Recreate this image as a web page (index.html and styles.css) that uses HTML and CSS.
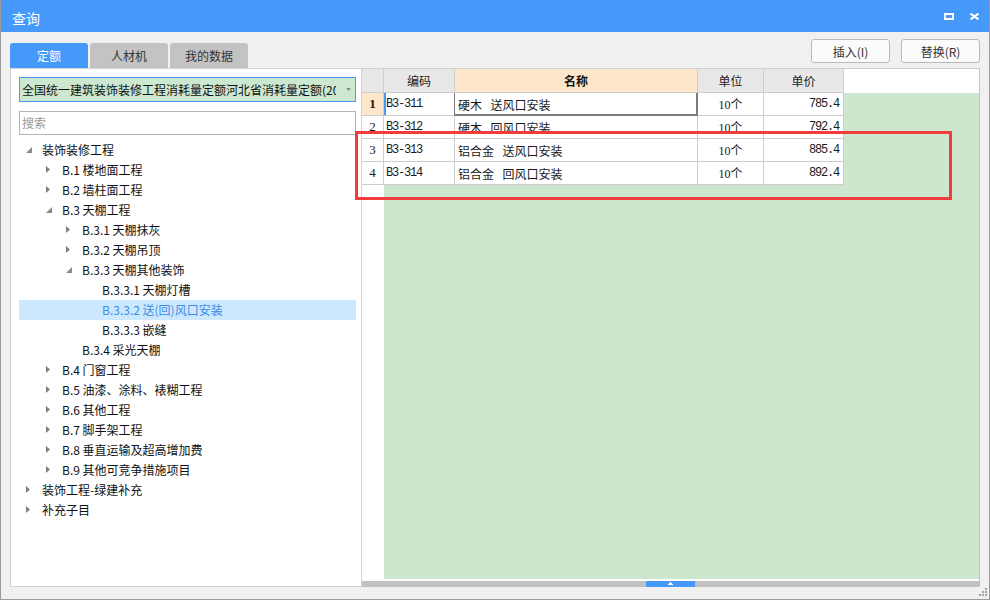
FILE: index.html
```html
<!DOCTYPE html>
<html lang="zh-CN">
<head>
<meta charset="utf-8">
<title>查询</title>
<link rel="stylesheet" href="styles.css">
</head>
<body>
<div class="window">
  <div class="titlebar">
    <span class="title">查询</span>
    <div class="winbtns">
      <svg class="wb-max" width="10" height="7" viewBox="0 0 10 7"><rect x="1" y="1" width="8" height="5" fill="none" stroke="#fff" stroke-width="2"/></svg>
      <svg class="wb-close" width="9" height="7" viewBox="0 0 9 7"><path d="M0.5 0.5L8.5 6.5M8.5 0.5L0.5 6.5" stroke="#fff" stroke-width="2"/></svg>
    </div>
  </div>
  <div class="content">
    <div class="toprow">
      <div class="tabs">
        <div class="tab active">定额</div>
        <div class="tab">人材机</div>
        <div class="tab">我的数据</div>
      </div>
      <div class="actions">
        <button class="btn">插入(I)</button>
        <button class="btn">替换(R)</button>
      </div>
    </div>
    <div class="main">
      <div class="left">
        <div class="select">
          <span class="select-text">全国统一建筑装饰装修工程消耗量定额河北省消耗量定额(2012)</span>
          <svg class="select-arrow" width="5" height="3" viewBox="0 0 5 3"><path d="M0 0H5L2.5 3Z" fill="#8a8a8a"/></svg>
        </div>
        <div class="search">搜索</div>
        <ul class="tree">
          <li class="node l0"><span class="tog"><svg width="6" height="6" viewBox="0 0 6 6"><path d="M6 0V6H0Z" fill="#8a8a8a"/></svg></span><span class="label">装饰装修工程</span></li>
          <li class="node l1"><span class="tog"><svg width="4" height="7" viewBox="0 0 4 7"><path d="M0 0L4 3.5L0 7Z" fill="#7f7f7f"/></svg></span><span class="label">B.1 楼地面工程</span></li>
          <li class="node l1"><span class="tog"><svg width="4" height="7" viewBox="0 0 4 7"><path d="M0 0L4 3.5L0 7Z" fill="#7f7f7f"/></svg></span><span class="label">B.2 墙柱面工程</span></li>
          <li class="node l1"><span class="tog"><svg width="6" height="6" viewBox="0 0 6 6"><path d="M6 0V6H0Z" fill="#8a8a8a"/></svg></span><span class="label">B.3 天棚工程</span></li>
          <li class="node l2"><span class="tog"><svg width="4" height="7" viewBox="0 0 4 7"><path d="M0 0L4 3.5L0 7Z" fill="#7f7f7f"/></svg></span><span class="label">B.3.1 天棚抹灰</span></li>
          <li class="node l2"><span class="tog"><svg width="4" height="7" viewBox="0 0 4 7"><path d="M0 0L4 3.5L0 7Z" fill="#7f7f7f"/></svg></span><span class="label">B.3.2 天棚吊顶</span></li>
          <li class="node l2"><span class="tog"><svg width="6" height="6" viewBox="0 0 6 6"><path d="M6 0V6H0Z" fill="#8a8a8a"/></svg></span><span class="label">B.3.3 天棚其他装饰</span></li>
          <li class="node l3"><span class="tog"></span><span class="label">B.3.3.1 天棚灯槽</span></li>
          <li class="node l3 selected"><span class="tog"></span><span class="label">B.3.3.2 送(回)风口安装</span></li>
          <li class="node l3"><span class="tog"></span><span class="label">B.3.3.3 嵌缝</span></li>
          <li class="node l2"><span class="tog"></span><span class="label">B.3.4 采光天棚</span></li>
          <li class="node l1"><span class="tog"><svg width="4" height="7" viewBox="0 0 4 7"><path d="M0 0L4 3.5L0 7Z" fill="#7f7f7f"/></svg></span><span class="label">B.4 门窗工程</span></li>
          <li class="node l1"><span class="tog"><svg width="4" height="7" viewBox="0 0 4 7"><path d="M0 0L4 3.5L0 7Z" fill="#7f7f7f"/></svg></span><span class="label">B.5 油漆、涂料、裱糊工程</span></li>
          <li class="node l1"><span class="tog"><svg width="4" height="7" viewBox="0 0 4 7"><path d="M0 0L4 3.5L0 7Z" fill="#7f7f7f"/></svg></span><span class="label">B.6 其他工程</span></li>
          <li class="node l1"><span class="tog"><svg width="4" height="7" viewBox="0 0 4 7"><path d="M0 0L4 3.5L0 7Z" fill="#7f7f7f"/></svg></span><span class="label">B.7 脚手架工程</span></li>
          <li class="node l1"><span class="tog"><svg width="4" height="7" viewBox="0 0 4 7"><path d="M0 0L4 3.5L0 7Z" fill="#7f7f7f"/></svg></span><span class="label">B.8 垂直运输及超高增加费</span></li>
          <li class="node l1"><span class="tog"><svg width="4" height="7" viewBox="0 0 4 7"><path d="M0 0L4 3.5L0 7Z" fill="#7f7f7f"/></svg></span><span class="label">B.9 其他可竞争措施项目</span></li>
          <li class="node l0"><span class="tog"><svg width="4" height="7" viewBox="0 0 4 7"><path d="M0 0L4 3.5L0 7Z" fill="#7f7f7f"/></svg></span><span class="label">装饰工程-绿建补充</span></li>
          <li class="node l0"><span class="tog"><svg width="4" height="7" viewBox="0 0 4 7"><path d="M0 0L4 3.5L0 7Z" fill="#7f7f7f"/></svg></span><span class="label">补充子目</span></li>
        </ul>
      </div>
      <div class="grid">
        <div class="ghead">
          <div class="c rh"></div>
          <div class="c code">编码</div>
          <div class="c name">名称</div>
          <div class="c unit">单位</div>
          <div class="c price">单价</div>
        </div>
        <div class="gbody">
          <div class="grow current">
            <div class="c rh">1</div>
            <div class="c code">B3-311</div>
            <div class="c name active">硬木  送风口安装</div>
            <div class="c unit">10个</div>
            <div class="c price">785.4</div>
          </div>
          <div class="grow">
            <div class="c rh">2</div>
            <div class="c code">B3-312</div>
            <div class="c name">硬木  回风口安装</div>
            <div class="c unit">10个</div>
            <div class="c price">792.4</div>
          </div>
          <div class="grow">
            <div class="c rh">3</div>
            <div class="c code">B3-313</div>
            <div class="c name">铝合金  送风口安装</div>
            <div class="c unit">10个</div>
            <div class="c price">885.4</div>
          </div>
          <div class="grow">
            <div class="c rh">4</div>
            <div class="c code">B3-314</div>
            <div class="c name">铝合金  回风口安装</div>
            <div class="c unit">10个</div>
            <div class="c price">892.4</div>
          </div>
        </div>
        <div class="hscroll">
          <div class="thumb"><svg width="5" height="3" viewBox="0 0 5 3"><path d="M2 0H3V1H4V2H5V3H0V2H1V1H2Z" fill="#fff"/></svg></div>
        </div>
      </div>
    </div>
  </div>
  <div class="redbox"></div>
  <svg class="grip" width="8" height="9" viewBox="0 0 8 9"><g fill="#a3a3a3"><rect x="6" y="1" width="2" height="2"/><rect x="3" y="4" width="2" height="2"/><rect x="6" y="4" width="2" height="2"/><rect x="0" y="7" width="2" height="2"/><rect x="3" y="7" width="2" height="2"/><rect x="6" y="7" width="2" height="2"/></g></svg>
</div>
</body>
</html>
```
FILE: styles.css
```css
* { box-sizing: border-box; margin: 0; padding: 0; }
html, body { width: 990px; height: 600px; overflow: hidden; }
body {
  font-family: "Noto Sans CJK SC", "Microsoft YaHei", sans-serif;
  font-size: 12px;
  color: #1a1a1a;
  background: #f0f0f0;
}
.window {
  position: relative;
  width: 990px;
  height: 600px;
  border: 1px solid #9b9b9b;
  border-top: none;
  background: #f0f0f0;
  display: flex;
  flex-direction: column;
}
.titlebar {
  height: 32px;
  flex: none;
  background: #4599fb;
  display: flex;
  align-items: center;
  justify-content: space-between;
  padding: 0 10px 0 11px;
  color: #fff;
}
.title { font-size: 14px; line-height: 20px; padding-top: 4px; }
.winbtns { display: flex; align-items: center; gap: 16px; }
.winbtns svg { display: block; }

.content { flex: 1; display: flex; flex-direction: column; padding: 0 9px; }
.toprow { height: 36px; flex: none; display: flex; justify-content: space-between; }
.tabs { display: flex; align-items: flex-end; gap: 2px; }
.tab {
  width: 78px;
  height: 25px;
  line-height: 25px;
  text-align: center;
  background: #c3c3c3;
  color: #333;
  border-radius: 3px 3px 0 0;
}
.tab.active { background: #4599fb; color: #fff; }
.actions { display: flex; gap: 11px; padding-top: 7px; }
.btn {
  width: 79px;
  height: 24px;
  border: 1px solid #bababa;
  border-radius: 3px;
  background: #fbfbfb;
  font: inherit;
  color: #333;
}

.main { height: 519px; flex: none; display: flex; }
.left {
  width: 352px;
  flex: none;
  border: 1px solid #d3d3d3;
  background: #fff;
  padding: 8px 5px 0 8px;
}
.select {
  height: 25px;
  border: 1px solid #4599fb;
  background: #cde8d0;
  display: flex;
  align-items: center;
  padding-left: 2px;
  color: #111;
}
.select-text { width: 314px; overflow: hidden; white-space: nowrap; line-height: 23px; }
.select-arrow { margin-left: auto; margin-right: 4px; display: block; }
.search {
  margin-top: 9px;
  height: 24px;
  border: 1px solid #b5b5b5;
  color: #9a9a9a;
  line-height: 22px;
  padding-left: 2px;
}
.tree { margin-top: 5px; list-style: none; }
.node { height: 20px; display: flex; align-items: center; color: #111; }
.tog { width: 19px; flex: none; display: flex; align-items: center; padding-left: 3px; margin-top: -1px; }
.tog svg { display: block; }
.label { line-height: 20px; white-space: nowrap; }
.l0 { padding-left: 4px; }
.l1 { padding-left: 24px; }
.l2 { padding-left: 44px; }
.l3 { padding-left: 64px; }
.node.selected { background: #cce8ff; color: #3d8ce5; }

.grid {
  flex: 1;
  display: flex;
  flex-direction: column;
  background: #fff;
  border-top: 1px solid #cfcfcf;
  border-right: 1px solid #c4c4c4;
}
.ghead, .grow { display: flex; flex: none; }
.ghead { height: 24px; }
.grow { height: 23px; }
.c {
  flex: none;
  border-right: 1px solid #cdcdcd;
  border-bottom: 1px solid #cdcdcd;
  display: flex;
  align-items: center;
  white-space: pre;
  background: #fff;
}
.rh { width: 22px; justify-content: center; font-family: "Liberation Serif", serif; font-size: 13px; }
.code { width: 71px; padding-left: 2px; font-family: "Liberation Mono", monospace; font-size: 12px; letter-spacing: -1.2px; }
.name { width: 243px; padding-left: 3px; word-spacing: 1.5px; }
.unit { width: 66px; justify-content: center; font-family: "Liberation Serif", "Noto Sans CJK SC", serif; font-size: 12px; }
.price { width: 80px; justify-content: flex-end; padding-right: 4px; font-family: "Liberation Mono", monospace; font-size: 12px; letter-spacing: -1.2px; }
.ghead .c {
  background: #e8e8e8;
  justify-content: center;
  padding: 0;
  font-family: "Noto Sans CJK SC", sans-serif;
  font-size: 12px;
  letter-spacing: 0;
  color: #222;
}
.ghead .name { background: #fde6c9; font-weight: bold; color: #111; }
.gbody { flex: 1; background: linear-gradient(to right, #fff 22px, #cde7cf 22px); }
.grow.current .rh { background: #fde6c9; font-weight: bold; }
.grow.current .code { box-shadow: inset 2px 0 #4599fb; border-right-color: #7b7b7b; }
.grow .name.active {
  border-right-color: #7b7b7b;
  border-bottom-color: #7b7b7b;
  box-shadow: inset -1px 0 #7b7b7b, inset 0 -1px #7b7b7b;
}
.hscroll { height: 6px; margin-top: 2px; flex: none; background: #c1c1c1; }
.thumb {
  margin-left: 284px;
  width: 49px;
  height: 6px;
  background: #4599fb;
  display: flex;
  justify-content: center;
  padding-top: 1px;
}
.thumb svg { display: block; }

.redbox {
  position: absolute;
  left: 354px;
  top: 131px;
  width: 597px;
  height: 69px;
  border: 3px solid #f23c3c;
}
.grip { position: absolute; right: 2px; bottom: 3px; display: block; }
```
